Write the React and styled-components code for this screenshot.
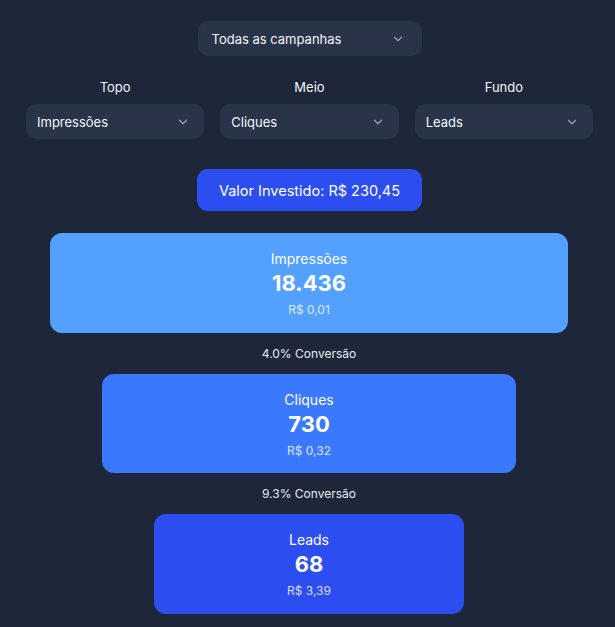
import React, { useState } from 'react';
import styled, { createGlobalStyle } from 'styled-components';
import { ChevronDown } from 'lucide-react';

const GlobalStyle = createGlobalStyle`
  html, body {
    margin: 0;
    padding: 0;
    background: #1e2739;
  }
  body {
    font-family: Inter, "Noto Sans", sans-serif;
    color: #ffffff;
  }
`

const stages = [
  { name: 'Impressões', value: '18.436', cost: 'R$ 0,01', width: 100, color: '#54a0fe' },
  { name: 'Cliques', value: '730', cost: 'R$ 0,32', width: 80, color: '#3a79fe' },
  { name: 'Leads', value: '68', cost: 'R$ 3,39', width: 60, color: '#2c4ef1' },
]

const conversions = ['4.0% Conversão', '9.3% Conversão']

function Select({ value, wide }) {
  return (
    <SelectBox $wide={wide}>
      <span>{value}</span>
      <ChevronDown size={14} strokeWidth={2} />
    </SelectBox>
  )
}

export default function App() {
  const [campaign] = useState('Todas as campanhas')

  return (
    <>
      <GlobalStyle />
      <Page>
        <Select value={campaign} wide />
        <Columns>
          <Column>
            <ColumnLabel>Topo</ColumnLabel>
            <Select value="Impressões" />
          </Column>
          <Column>
            <ColumnLabel>Meio</ColumnLabel>
            <Select value="Cliques" />
          </Column>
          <Column>
            <ColumnLabel>Fundo</ColumnLabel>
            <Select value="Leads" />
          </Column>
        </Columns>
        <Invested>Valor Investido: R$ 230,45</Invested>
        <Funnel>
          {stages.map((s, i) => (
            <React.Fragment key={s.name}>
              <Stage $color={s.color} style={{ width: `${s.width}%` }}>
                <StageName>{s.name}</StageName>
                <StageValue>{s.value}</StageValue>
                <StageCost>{s.cost}</StageCost>
              </Stage>
              {conversions[i] && <Conversion>{conversions[i]}</Conversion>}
            </React.Fragment>
          ))}
        </Funnel>
      </Page>
    </>
  )
}

const Page = styled.div`
  padding: 21px 22px 13px 26px;
  display: flex;
  flex-direction: column;
  align-items: center;
`

const SelectBox = styled.div`
  box-sizing: border-box;
  width: ${p => (p.$wide ? '224px' : '100%')};
  height: 35px;
  padding: 0 14px 0 ${p => (p.$wide ? '14px' : '11px')};
  display: flex;
  align-items: center;
  justify-content: space-between;
  background: #2a3449;
  border-radius: 10px;
  font-size: 13px;
  color: #f1f5f9;

  svg {
    color: #94a3b8;
    margin-right: ${p => (p.$wide ? '3px' : '0')};
  }
`

const Columns = styled.div`
  width: 100%;
  margin-top: 23px;
  display: grid;
  grid-template-columns: repeat(3, 1fr);
  gap: 16px;
`

const Column = styled.div`
  display: flex;
  flex-direction: column;
  align-items: center;
  gap: 9px;
`

const ColumnLabel = styled.div`
  font-size: 13px;
  line-height: 16px;
  color: #f1f5f9;
`

const Invested = styled.div`
  margin-top: 30px;
  box-sizing: border-box;
  width: 225px;
  height: 42px;
  display: flex;
  align-items: center;
  justify-content: center;
  background: #2c4ef1;
  border-radius: 11px;
  font-size: 14.5px;
`

const Funnel = styled.div`
  margin-top: 22px;
  margin-right: 1px;
  width: 518px;
  display: flex;
  flex-direction: column;
  align-items: center;
`

const Stage = styled.div`
  box-sizing: border-box;
  height: 99.5px;
  padding-top: 16px;
  display: flex;
  flex-direction: column;
  align-items: center;
  background: ${p => p.$color};
  border-radius: 12px;
`

const StageName = styled.div`
  font-size: 14px;
  line-height: 20px;
`

const StageValue = styled.div`
  font-size: 22px;
  font-weight: 700;
  line-height: 28px;
`

const StageCost = styled.div`
  margin-top: 5px;
  font-size: 12px;
  line-height: 16px;
  color: rgba(255, 255, 255, 0.82);
`

const Conversion = styled.div`
  margin: 13px 0 12px;
  font-size: 12px;
  line-height: 16px;
  color: #e5e9f0;
`
